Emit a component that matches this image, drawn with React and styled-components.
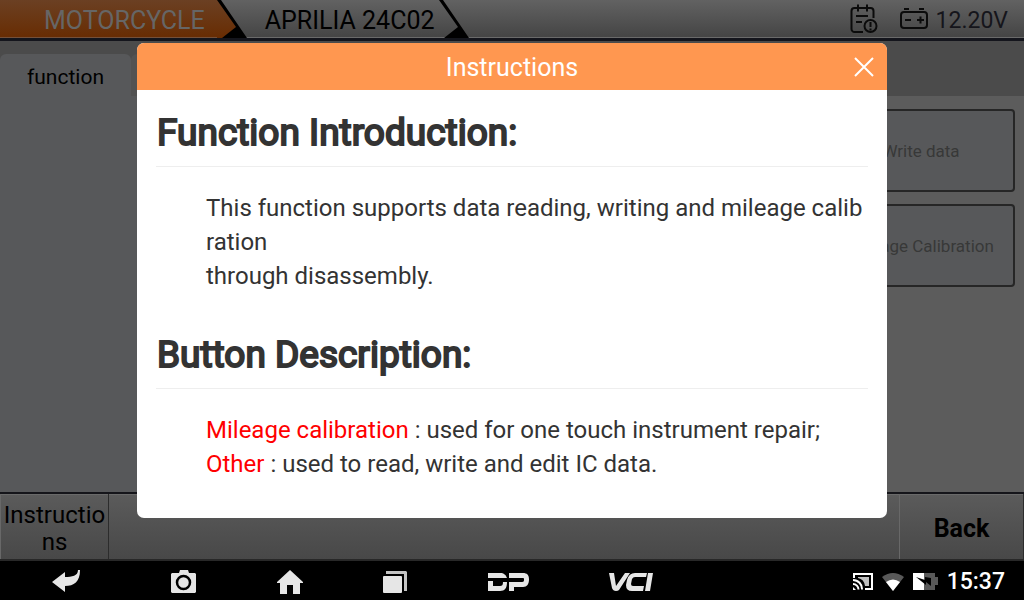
import styled, { createGlobalStyle, css } from 'styled-components'

const GlobalStyle = createGlobalStyle`
  * {
    box-sizing: border-box;
  }

  body {
    margin: 0;
    background: #000;
    font-family: Roboto, "Liberation Sans", sans-serif;
  }

  button {
    border: 0;
    padding: 0;
    background: none;
    font: inherit;
    color: inherit;
    cursor: pointer;
  }
`

const Screen = styled.div`
  position: relative;
  display: flex;
  flex-direction: column;
  min-height: 100vh;
`

const TopBar = styled.header`
  display: flex;
  justify-content: space-between;
  height: 41px;
  border-bottom: 3px solid #14151c;
  background: linear-gradient(#626262, #444);
  box-shadow: inset 0 -1px #6a6a6a;
`

const Crumbs = styled.nav`
  display: flex;
`

const Crumb = styled.button`
  display: flex;
  align-items: center;
  padding: 4px 4px 0 17px;
  font-size: 25px;
  line-height: 28px;
  color: #000;
  ${p =>
    p.$active &&
    css`
      padding-left: 44px;
      padding-right: 12px;
      background: linear-gradient(#6b4023, #682c02);
      box-shadow: inset 0 -1px #755039;
      color: #666;
    `}
`

const Arrow = styled.svg`
  display: block;
  flex: none;
  width: 31px;
  height: 38px;
`

const Status = styled.div`
  display: flex;
  align-items: center;
  padding: 0 16px 0 0;
  font-size: 23px;
  color: #15151b;

  svg {
    display: block;
  }
`

const ReportButton = styled.button`
  margin-right: 22px;
`

const Voltage = styled.span`
  margin-left: 8px;
  padding-top: 4px;
  line-height: 28px;
`

const TabBar = styled.div`
  display: flex;
  align-items: flex-end;
  height: 55px;
  background: #4b4b4b;
`

const Tab = styled.button`
  width: 131px;
  height: 42px;
  padding-top: 4px;
  border-radius: 6px 6px 0 0;
  background: #57585a;
  font-size: 21px;
  color: #000;
`

const TabSpacer = styled.div`
  width: 131px;
  height: 42px;
  border-radius: 6px 6px 0 0;
  background: #525252;
`

const Body = styled.main`
  flex: 1;
  display: flex;
  background: #57585a;
`

const Actions = styled.div`
  flex: 1;
  display: grid;
  grid-template-columns: repeat(auto-fill, 188px);
  grid-auto-rows: 83px;
  justify-content: end;
  align-content: start;
  gap: 12px;
  margin-left: 200px;
  padding: 13px 9px;
  background: #5c5c5c;
`

const Action = styled.button`
  grid-column: -2;
  border: 2px solid #262626;
  border-radius: 4px;
  background: #57585a;
  font-size: 17px;
  color: #383838;
`

const BottomBar = styled.footer`
  display: flex;
  justify-content: space-between;
  height: 69px;
  border-top: 2px solid #15151a;
  border-bottom: 2px solid #282828;
  background: linear-gradient(#5b5b5b, #484848);
  box-shadow: inset 0 1px #6a6a6a;
`

const BarButton = styled.button`
  width: ${p => (p.$strong ? '125px' : '109px')};
  padding-top: 4px;
  font-size: ${p => (p.$strong ? '25px' : '24px')};
  font-weight: ${p => (p.$strong ? 700 : 400)};
  line-height: 27px;
  word-break: break-all;
  color: #000;
  border-left: 1px solid #686868;
  border-right: 1px solid #2c2c2c;
`

const SystemBar = styled.div`
  display: grid;
  grid-template-columns: 132fr 102fr 112fr 98fr 128fr 118fr 334fr;
  height: 39px;
  background: #000;
  color: #e6e6e6;
`

const SystemButton = styled.button`
  display: flex;
  align-items: center;
  justify-content: center;
  padding-top: 2px;
`

const Tray = styled.div`
  display: flex;
  align-items: center;
  justify-content: flex-end;
  gap: 9px;
  padding: 2px 19px 0 0;
  color: #fff;
`

const Clock = styled.time`
  font-size: 23px;
  font-weight: 500;
`

const Overlay = styled.div`
  position: absolute;
  inset: 0 0 39px;
  display: flex;
  align-items: center;
  justify-content: center;
`

const Dialog = styled.section`
  width: 750px;
  max-width: 100%;
  border-radius: 7px;
  overflow: hidden;
  background: #fff;
  color: #333;
`

const DialogHeader = styled.header`
  display: grid;
  grid-template-columns: 47px 1fr 47px;
  align-items: center;
  height: 47px;
  background: #ff9750;
  color: #fff;
`

const DialogTitle = styled.h1`
  grid-column: 2;
  margin: 0;
  padding-top: 2px;
  font-size: 25px;
  font-weight: 400;
  line-height: 28px;
  text-align: center;
`

const CloseButton = styled.button`
  display: flex;
  align-items: center;
  justify-content: center;
  height: 47px;
`

const DialogBody = styled.div`
  padding: 18px 19px 37px;
`

const Heading = styled.h2`
  margin: 0 0 24px;
  padding-bottom: 8px;
  border-bottom: 1px solid #eee;
  font-size: 37px;
  font-weight: 400;
  line-height: 50px;
  text-indent: 1px;
  -webkit-text-stroke: 2px #333;
`

const Text = styled.p`
  margin: 0 0 37px 50px;
  font-size: 24px;
  line-height: 34px;
  word-break: break-all;

  &:last-child {
    margin-bottom: 0;
  }
`

const Term = styled.span`
  color: #f00;
`

const CrumbArrow = ({ active }) => (
  <Arrow viewBox="0 0 31 38" aria-hidden="true">
    {active && (
      <>
        <defs>
          <linearGradient id="crumb" x1="0" y1="0" x2="0" y2="1">
            <stop offset="0" stopColor="#6b4023" />
            <stop offset="1" stopColor="#682c02" />
          </linearGradient>
        </defs>
        <path d="M0 0h2l18 27L7 38H0z" fill="url(#crumb)" />
      </>
    )}
    <path d="M0 0h4l26 38H5l14-11z" fill="#000" />
  </Arrow>
)

const ReportIcon = () => (
  <svg width="28" height="30" viewBox="0 0 28 30" fill="none" stroke="#0b0b0b" strokeWidth="2">
    <path d="M13 28H4.500a3 3 0 0 1-3-3V7a3 3 0 0 1 3-3H20.500a3 3 0 0 1 3 3v7" />
    <path d="M8 .5v7M17 .5v7M6 12h12M6 18h6" />
    <circle cx="20.500" cy="22" r="6" />
    <path d="M20.500 18v5M20.500 24.500v2" />
  </svg>
)

const BatteryIcon = () => (
  <svg width="28" height="22" viewBox="0 0 28 22" fill="none" stroke="#0b0b0b" strokeWidth="2">
    <rect x="1" y="4" width="26" height="16" rx="3" />
    <path d="M4 1h5M19 1h5M5 12h6M17 12h7M20.500 8.500v7" />
  </svg>
)

const CloseIcon = () => (
  <svg width="20" height="20" viewBox="0 0 20 20" stroke="#fff" strokeWidth="2">
    <path d="M1 1l18 18M19 1L1 19" />
  </svg>
)

const BackIcon = () => (
  <svg width="28" height="23" viewBox="0 0 28 23" fill="currentColor">
    <path d="M0 12L13 2v5c7 0 13-1 13-7h2c0 12-6 16-15 16v6z" />
  </svg>
)

const CameraIcon = () => (
  <svg width="25" height="23" viewBox="0 0 25 23" fill="currentColor">
    <path d="M1 3h7l1-3h8l1 3h6l1 1v18l-1 1H1l-1-1V4z" />
    <circle cx="12.500" cy="12.500" r="6.500" fill="none" stroke="#000" strokeWidth="2.500" />
  </svg>
)

const HomeIcon = () => (
  <svg width="26" height="24" viewBox="0 0 26 24" fill="currentColor">
    <path d="M13 0l13 12v1h-3v11h-7v-9h-6v9H3V13H0v-1z" />
  </svg>
)

const RecentIcon = () => (
  <svg width="24" height="22" viewBox="0 0 24 22" fill="currentColor">
    <rect y="5" width="19" height="17" rx="1" />
    <path d="M3 0h20l1 1v19h-3V3H3z" opacity=".85" />
  </svg>
)

const DpLogo = () => (
  <svg width="41" height="18" viewBox="0 0 41 18" fill="currentColor">
    <path d="M0 0h12c4 0 6 2 7 5H0zM0 8h5v5h7c2 0 3-1 3-4h4c0 6-2 9-7 9H0zM21 0h14c4 0 6 2 6 6.500S39 14 35 14h-9v4h-5V9h13c2 0 2-1 2-2.500S36 5 34 5H21z" />
  </svg>
)

const VciLogo = () => (
  <svg width="44" height="18" viewBox="0 0 44 18" fill="currentColor">
    <path d="M0 0h5l2 13 9-13h5L10 17q-1 1-3 1-3 0-4-3zM26 0h12l-1 4H26q-2 0-3 2l-1 5q0 2 2 2h11l-1 5H23q-6 0-6-6l1-5q2-7 8-7zM39 0h5l-3 18h-5z" />
  </svg>
)

const CastIcon = () => (
  <svg width="20" height="17" viewBox="0 0 20 17" fill="none" stroke="currentColor" strokeWidth="2">
    <path d="M1 5V1h18v15h-7" />
    <path d="M5 4h11v9h-4Q11 6 5 5z" fill="currentColor" stroke="none" opacity=".75" />
    <path d="M0 7a9 9 0 0 1 9 9.500M0 11a5.500 5.500 0 0 1 5.500 5.500" />
    <path d="M0 14l3 3H0z" fill="currentColor" stroke="none" />
  </svg>
)

const WifiIcon = () => (
  <svg width="22" height="18" viewBox="0 0 22 18" fill="currentColor">
    <path d="M0 4q11-8 22 0L11 18z" opacity=".35" />
    <path d="M4 9q7-5 14 0l-7 9z" />
  </svg>
)

const ChargeIcon = () => (
  <svg width="25" height="17" viewBox="0 0 25 17" fill="currentColor">
    <path d="M11 0h11v4h3v8h-3v5H11z" opacity=".35" />
    <path d="M0 0h11v17H0z" />
    <path d="M3 4l9 3V4l6 1v8l-5-4v3z" fill="#000" />
  </svg>
)

const systemButtons = [
  ['Back', BackIcon],
  ['Screenshot', CameraIcon],
  ['Home', HomeIcon],
  ['Recent apps', RecentIcon],
  ['DP', DpLogo],
  ['VCI', VciLogo],
]

export default () => (
  <Screen>
    <GlobalStyle />
    <TopBar>
      <Crumbs>
        <Crumb $active>MOTORCYCLE</Crumb>
        <CrumbArrow active />
        <Crumb>APRILIA 24C02</Crumb>
        <CrumbArrow />
      </Crumbs>
      <Status>
        <ReportButton aria-label="Report">
          <ReportIcon />
        </ReportButton>
        <BatteryIcon />
        <Voltage>12.20V</Voltage>
      </Status>
    </TopBar>
    <TabBar>
      <Tab>function</Tab>
      <TabSpacer />
    </TabBar>
    <Body>
      <Actions>
        <Action>Write data</Action>
        <Action>Mileage Calibration</Action>
      </Actions>
    </Body>
    <BottomBar>
      <BarButton>Instructions</BarButton>
      <BarButton $strong>Back</BarButton>
    </BottomBar>
    <SystemBar>
      {systemButtons.map(([label, Icon]) => (
        <SystemButton key={label} aria-label={label}>
          <Icon />
        </SystemButton>
      ))}
      <Tray>
        <CastIcon />
        <WifiIcon />
        <ChargeIcon />
        <Clock>15:37</Clock>
      </Tray>
    </SystemBar>
    <Overlay>
      <Dialog role="dialog" aria-labelledby="dialog-title">
        <DialogHeader>
          <DialogTitle id="dialog-title">Instructions</DialogTitle>
          <CloseButton aria-label="Close">
            <CloseIcon />
          </CloseButton>
        </DialogHeader>
        <DialogBody>
          <Heading>Function Introduction:</Heading>
          <Text>
            This function supports data reading, writing and mileage calibration
            <br />
            through disassembly.
          </Text>
          <Heading>Button Description:</Heading>
          <Text>
            <Term>Mileage calibration</Term> : used for one touch instrument repair;
            <br />
            <Term>Other</Term> : used to read, write and edit IC data.
          </Text>
        </DialogBody>
      </Dialog>
    </Overlay>
  </Screen>
)
